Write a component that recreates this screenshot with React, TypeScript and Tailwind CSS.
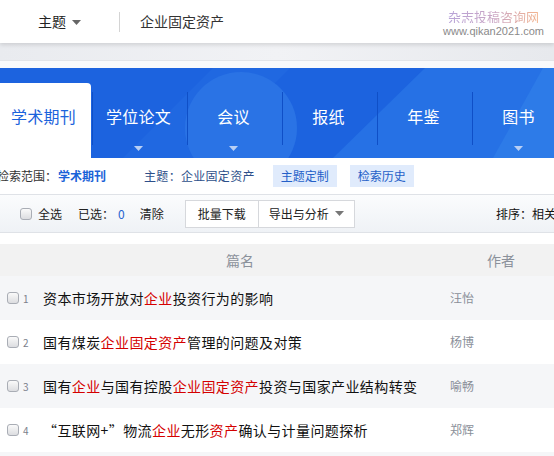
import React from 'react';

const font = { fontFamily: '"Noto Sans CJK SC", "Liberation Sans", sans-serif' };

type Part = { t: string; hl?: boolean };

const rows: { n: number; parts: Part[]; author: string }[] = [
  {
    n: 1,
    parts: [{ t: '资本市场开放对' }, { t: '企业', hl: true }, { t: '投资行为的影响' }],
    author: '汪怡',
  },
  {
    n: 2,
    parts: [{ t: '国有煤炭' }, { t: '企业固定资产', hl: true }, { t: '管理的问题及对策' }],
    author: '杨博',
  },
  {
    n: 3,
    parts: [
      { t: '国有' },
      { t: '企业', hl: true },
      { t: '与国有控股' },
      { t: '企业固定资产', hl: true },
      { t: '投资与国家产业结构转变' },
    ],
    author: '喻畅',
  },
  {
    n: 4,
    parts: [
      { t: '“互联网+”物流' },
      { t: '企业', hl: true },
      { t: '无形' },
      { t: '资产', hl: true },
      { t: '确认与计量问题探析' },
    ],
    author: '郑辉',
  },
];

const tabs = [
  { label: '学术期刊', caret: false },
  { label: '学位论文', caret: true },
  { label: '会议', caret: true },
  { label: '报纸', caret: false },
  { label: '年鉴', caret: false },
  { label: '图书', caret: true },
];

function Checkbox({ className = '' }: { className?: string }) {
  return (
    <span
      className={`inline-block w-[12px] h-[12px] rounded-[3px] border border-[#a9adb5] bg-gradient-to-b from-[#fafafa] to-[#dcdde0] ${className}`}
    />
  );
}

function Caret({ color }: { color: string }) {
  return (
    <svg width="9" height="5" viewBox="0 0 9 5">
      <path d="M0 0h9L4.5 5z" fill={color} />
    </svg>
  );
}

export default function App() {
  return (
    <div className="w-[554px] h-[456px] overflow-hidden bg-white text-[#222]" style={font}>
      {/* top header */}
      <div className="relative z-10 h-[43px] bg-white flex items-center shadow-[0_2px_4px_rgba(0,0,0,0.12)]">
        <div className="flex items-center ml-[38px] text-[14px] text-[#222]">
          <span>主题</span>
          <span className="ml-[6px] mt-[1px]">
            <Caret color="#666" />
          </span>
        </div>
        <div className="ml-[38px] w-px h-[20px] bg-[#d4d4d4]" />
        <div className="ml-[20px] text-[14px] text-[#333]">企业固定资产</div>
        <div className="ml-auto mr-[10px] flex flex-col items-center leading-none pt-[3px]">
          <span className="text-[13px] bg-gradient-to-r from-[#b7a3d8] via-[#c9a4c4] to-[#f3b48d] bg-clip-text text-transparent">
            杂志投稿咨询网
          </span>
          <span className="mt-[3px] text-[11px] text-[#8a8a8a]" style={{ fontFamily: '"Liberation Sans", sans-serif' }}>
            www.qikan2021.com
          </span>
        </div>
      </div>
      <div className="h-[17px] bg-gradient-to-r from-[#e9ebef] via-[#f1f2f5] to-[#e7e9ed]" />
      <div className="h-[8px] bg-[#f8f9fb] border-t border-[#e2e4e8]" />

      {/* blue nav */}
      <div className="relative h-[90px] bg-[#1c63df] overflow-hidden">
        <svg className="absolute inset-0" width="554" height="90" viewBox="0 68 554 90">
          <polygon points="123,158 213,68 290,68 200,158" fill="#2068e1" />
          <circle cx="241" cy="128" r="56" fill="#2a73e5" />
          <polygon points="425,68 554,68 554,158 333,158" fill="#2671e5" />
          <polygon points="554,68 554,158 493,158 543,68" fill="#2d7be8" />
        </svg>
        <div className="relative flex items-end h-full ml-[-4px]">
          {tabs.map((tab, i) => (
            <div key={tab.label} className="relative w-[95px] h-[75px] shrink-0">
              {i === 0 ? (
                <div className="absolute left-[4px] right-0 top-0 bottom-0 bg-white rounded-tr-[4px]" />
              ) : (
                <div className="absolute left-[1px] top-[9px] h-[53px] w-px bg-[#0f4fc7]" />
              )}
              <div
                className={`relative flex justify-center pt-[23px] text-[16px] leading-[20px] tracking-[0.3px] ${
                  i === 0 ? 'text-[#1b62dc]' : 'text-white'
                }`}
              >
                {tab.label}
              </div>
              {tab.caret ? (
                <div className="absolute left-0 right-0 bottom-[7px] flex justify-center">
                  <Caret color="#b8cff5" />
                </div>
              ) : null}
            </div>
          ))}
        </div>
      </div>

      {/* search scope */}
      <div className="h-[36px] flex items-center text-[12px]">
        <span className="ml-[-3px] text-[#333]">检索范围：</span>
        <span className="ml-[1px] font-bold text-[#1a62d8]">学术期刊</span>
        <span className="ml-[38px] text-[#2d4f8a] tracking-[0.3px]">主题：企业固定资产</span>
        <span className="ml-[18px] h-[22px] w-[64px] flex items-center justify-center bg-[#e0ebfc] text-[#2460c8]">
          主题定制
        </span>
        <span className="ml-[13px] h-[22px] w-[64px] flex items-center justify-center bg-[#e0ebfc] text-[#2460c8]">
          检索历史
        </span>
      </div>

      {/* toolbar */}
      <div className="h-[39px] flex items-center border-t border-b border-[#dfe2e7] bg-gradient-to-b from-[#fbfcfd] to-[#eff2f6] text-[12px]">
        <Checkbox className="ml-[20px]" />
        <span className="ml-[6px]">全选</span>
        <span className="ml-[16px]">已选：</span>
        <span className="ml-[4px] text-[#2463cf]">0</span>
        <span className="ml-[15px]">清除</span>
        <span className="ml-[21px] h-[28px] w-[74px] flex items-center justify-center bg-white border border-[#d6d8dc]">
          批量下载
        </span>
        <span className="h-[28px] w-[96px] flex items-center justify-center gap-[6px] bg-white border border-l-0 border-[#d6d8dc]">
          导出与分析
          <Caret color="#777" />
        </span>
        <span className="ml-auto mr-[-14px] whitespace-nowrap text-[#111]">排序：相关度</span>
      </div>

      <div className="h-[11px]" />

      {/* table header */}
      <div className="h-[32px] flex items-center bg-[#f2f2f2] text-[14px] text-[#8b919b]">
        <span className="ml-[226px]">篇名</span>
        <span className="ml-[233px]">作者</span>
      </div>

      {rows.map((r, i) => (
        <div
          key={r.n}
          className={`h-[44px] flex items-center ${i % 2 === 0 ? 'bg-[#f5f6f8]' : 'bg-white'}`}
        >
          <Checkbox className="ml-[7px]" />
          <span className="ml-[4px] w-[20px] text-[10px] text-[#7b808c]">{r.n}</span>
          <span className="text-[14px] tracking-[0.4px] whitespace-nowrap text-[#111] w-[407px]">
            {r.parts.map((p, j) => (
              <span key={j} className={p.hl ? 'text-[#d40000]' : ''}>
                {p.t}
              </span>
            ))}
          </span>
          <span className="text-[12px] text-[#8a8f99]">{r.author}</span>
        </div>
      ))}
      <div className="h-[10px] bg-[#f5f6f8]" />
    </div>
  );
}
